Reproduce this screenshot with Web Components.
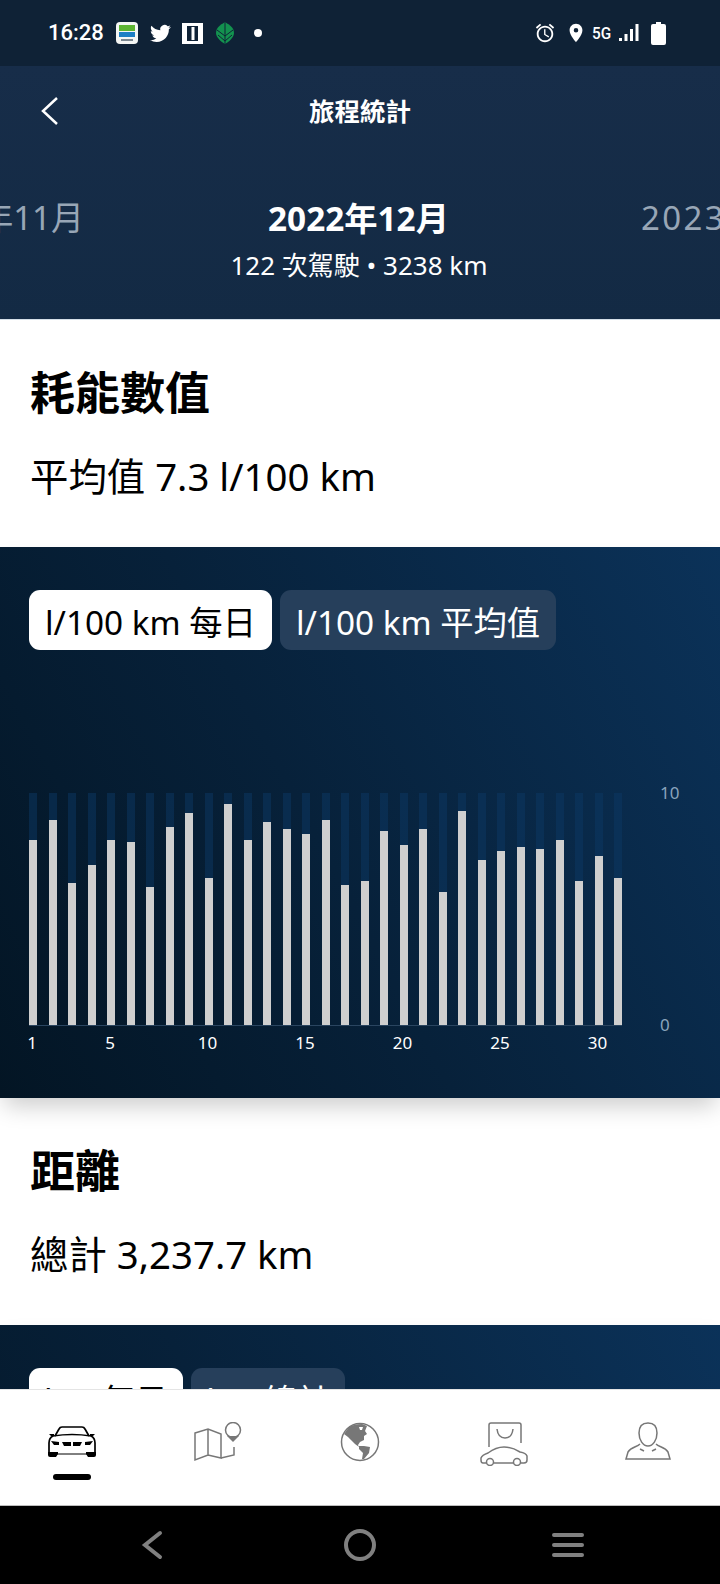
<!DOCTYPE html>
<html lang="zh-Hant">
<head>
<meta charset="utf-8">
<title>旅程統計</title>
<style>
    html, body { margin: 0; padding: 0; background: #000; }
    body { font-family: "Noto Sans", "Noto Sans CJK TC", sans-serif; }
</style>
</head>
<body>
<app-screen>
    <status-bar></status-bar>
    <trip-header></trip-header>
    <stat-section heading="耗能數值" summary="平均值 7.3 l/100 km"></stat-section>
    <chart-panel
        tabs="l/100 km 每日|l/100 km 平均值"
        values="7.96,8.84,6.12,6.90,7.96,7.87,5.93,8.55,9.12,6.32,9.51,7.96,8.74,8.45,8.25,8.84,6.03,6.22,8.36,7.77,8.45,5.73,9.22,7.10,7.49,7.67,7.57,7.96,6.22,7.28,6.32">
    </chart-panel>
    <stat-section heading="距離" summary="總計 3,237.7 km"></stat-section>
    <chart-panel class="compact" tabs="km 每日|km 總計"></chart-panel>
    <bottom-nav slot="nav"></bottom-nav>
</app-screen>

<script>
class AppScreen extends HTMLElement {
    constructor() {
        super();
        this.attachShadow({ mode: 'open' });
        this.shadowRoot.innerHTML = `
            <style>
                :host { display: flex; flex-direction: column; width: 720px; height: 1584px; overflow: hidden; background: #fff; }
                .scroll { flex: 1; min-height: 0; overflow: hidden; }
            </style>
            <div class="scroll"><slot></slot></div>
            <slot name="nav"></slot>
        `;
    }
}

class StatusBar extends HTMLElement {
    constructor() {
        super();
        this.attachShadow({ mode: 'open' });
        this.shadowRoot.innerHTML = `
            <style>
                :host { display: flex; align-items: center; height: 66px; padding: 0 54px 0 48px; background: #0f2236; color: #fff; box-sizing: border-box; }
                .time { font: 500 22px/1 Roboto, sans-serif; width: 68px; }
                svg { display: block; flex: none; }
                .left { display: flex; align-items: center; }
                .right { display: flex; align-items: center; margin-left: auto; }
                .five { font: 500 17px/1 Roboto, sans-serif; transform: scaleX(.9); margin: 1px 7px 0 5px; }
            </style>
            <div class="left">
                <span class="time">16:28</span>
                <svg width="22" height="22" viewBox="0 0 22 22" style="margin-right:12px">
                    <rect width="22" height="22" rx="4" fill="#f4f6f4"/>
                    <rect x="3" y="3" width="16" height="6" fill="#5cb431"/>
                    <rect x="3" y="10" width="16" height="5" fill="#1d7fc4"/>
                    <rect x="5" y="17" width="12" height="2" fill="#7b8790"/>
                </svg>
                <svg width="21" height="21" viewBox="0 0 24 24" fill="#fff" style="margin-right:11px">
                    <path d="M23.953 4.57a10 10 0 01-2.825.775 4.958 4.958 0 002.163-2.723c-.951.555-2.005.959-3.127 1.184a4.92 4.92 0 00-8.384 4.482C7.69 8.095 4.067 6.13 1.64 3.162a4.822 4.822 0 00-.666 2.475c0 1.71.87 3.213 2.188 4.096a4.904 4.904 0 01-2.228-.616v.06a4.923 4.923 0 003.946 4.827 4.996 4.996 0 01-2.212.085 4.936 4.936 0 004.604 3.417 9.867 9.867 0 01-6.102 2.105c-.39 0-.779-.023-1.17-.067a13.995 13.995 0 007.557 2.209c9.053 0 13.998-7.496 13.998-13.985 0-.21 0-.42-.015-.63A9.935 9.935 0 0024 4.59z"/>
                </svg>
                <svg width="21" height="21" viewBox="0 0 21 21" style="margin-right:12px">
                    <rect width="21" height="21" fill="#fff"/>
                    <rect x="5" y="3" width="11" height="15" fill="#0f2236"/>
                    <rect x="9.500" y="4" width="3" height="13" fill="#fff"/>
                </svg>
                <svg width="20" height="22" viewBox="0 0 20 22" style="margin-right:19px">
                    <path d="M10 0 C15 3 19 6 19 11 C19 15 14 20 10 22 C6 20 1 15 1 11 C1 6 5 3 10 0 Z" fill="#13924f"/>
                    <path d="M10 0 V22 M2 8 L10 14 L18 8 M3 13 L10 19 L17 13" fill="none" stroke="#0f2236" stroke-width="1"/>
                </svg>
                <svg width="8" height="8" viewBox="0 0 8 8"><circle cx="4" cy="4" r="4" fill="#fff"/></svg>
            </div>
            <div class="right">
                <svg width="22" height="22" viewBox="0 0 24 24" fill="#fff" style="margin-right:9px">
                    <path d="M22 5.72l-4.6-3.86-1.29 1.53 4.6 3.86L22 5.72zM7.88 3.39L6.6 1.86 2 5.71l1.29 1.53 4.59-3.85zM12.5 8H11v6l4.75 2.85.75-1.23-4-2.37V8zM12 4c-4.97 0-9 4.03-9 9s4.03 9 9 9 9-4.03 9-9-4.03-9-9-9zm0 16c-3.87 0-7-3.13-7-7s3.13-7 7-7 7 3.13 7 7-3.13 7-7 7z"/>
                </svg>
                <svg width="22" height="22" viewBox="0 0 24 24" fill="#fff" style="margin-right:-1px">
                    <path d="M12 2C8.13 2 5 5.13 5 9c0 5.25 7 13 7 13s7-7.75 7-13c0-3.87-3.13-7-7-7zm0 9.5a2.5 2.5 0 010-5 2.5 2.5 0 010 5z"/>
                </svg>
                <span class="five">5G</span>
                <svg width="20" height="18" viewBox="0 0 20 18" fill="#fff" style="margin-right:12px">
                    <rect x="0" y="14" width="3" height="3"/>
                    <rect x="5.500" y="10" width="3" height="7"/>
                    <rect x="11" y="5" width="3" height="12"/>
                    <rect x="16.500" y="0" width="3" height="17"/>
                </svg>
                <svg width="15" height="23" viewBox="0 0 15 23" fill="#fff">
                    <path d="M5 0h5v2h3a2 2 0 012 2v17a2 2 0 01-2 2H2a2 2 0 01-2-2V4a2 2 0 012-2h3z"/>
                </svg>
            </div>
        `;
    }
}

class TripHeader extends HTMLElement {
    constructor() {
        super();
        this.attachShadow({ mode: 'open' });
        this.shadowRoot.innerHTML = `
            <style>
                :host { display: block; height: 253px; background: linear-gradient(#172d49, #132a44); color: #fff; overflow: hidden; border-bottom: 1px solid #d5dfe8; }
                .top { position: relative; display: flex; justify-content: center; align-items: center; height: 92px; }
                .top svg { position: absolute; left: 40px; top: 30px; }
                .title { font-size: 25.500px; font-weight: 700; line-height: 1; }
                .months { display: grid; grid-template-columns: 84px 1fr 79px; align-items: center; margin-top: 37px; white-space: nowrap; }
                .side { font-size: 33px; line-height: 46px; color: #98a6b6; overflow: hidden; }
                .prev { display: flex; justify-content: flex-end; }
                .next { letter-spacing: 2.400px; }
                .now { font-size: 33.300px; line-height: 46px; font-weight: 700; text-align: center; padding-right: 8px; }
                .sub { text-align: center; font-size: 26px; line-height: 34px; margin-top: 7px; padding-right: 2px; }
            </style>
            <div class="top">
                <svg width="20" height="30" viewBox="0 0 20 30" fill="none" stroke="#fff" stroke-width="2.500"><path d="M17 2 L3 15 L17 28"/></svg>
                <span class="title">旅程統計</span>
            </div>
            <div class="months">
                <div class="side prev"><span>2022年11月</span></div>
                <div class="now">2022年12月</div>
                <div class="side next">2023年1月</div>
            </div>
            <div class="sub">122 次駕駛 • 3238 km</div>
        `;
    }
}

class StatSection extends HTMLElement {
    constructor() {
        super();
        this.attachShadow({ mode: 'open' });
        this.shadowRoot.innerHTML = `
            <style>
                :host { display: block; height: 227px; padding: 40px 30px 0; box-sizing: border-box; background: #fff; color: #000; }
                h2 { margin: 0; font-size: 45px; line-height: 66px; font-weight: 700; }
                p { margin: 22px 0 0; font-size: 38.400px; line-height: 56px; }
            </style>
            <h2>${this.getAttribute('heading')}</h2>
            <p>${this.getAttribute('summary')}</p>
        `;
    }
}

class ChartPanel extends HTMLElement {
    constructor() {
        super();
        this.attachShadow({ mode: 'open' });
        const tabs = this.getAttribute('tabs').split('|');
        const values = (this.getAttribute('values') || '').split(',').filter(Boolean).map(Number);
        this.shadowRoot.innerHTML = `
            <style>
                :host { display: block; height: 551px; box-sizing: border-box; padding: 43px 0 0 29px; position: relative; background: linear-gradient(62deg, #031524 0%, #07213a 45%, #0b3259 100%); box-shadow: 0 12px 22px -4px rgba(0,0,0,.2); }
                .tabs { display: flex; gap: 8px; }
                .tab { height: 60px; padding: 0 16px; display: flex; align-items: center; border-radius: 11px; background: #263f5b; color: #fff; font-size: 33.300px; box-sizing: border-box; }
                :host(.compact) .tab { padding: 0 15px; }
                .tab.on { background: #fff; color: #000; }
                .plot { display: flex; margin-top: 143px; }
                .cols { display: grid; grid-template-columns: repeat(31, 8px); column-gap: 11.510px; height: 232px; align-items: stretch; border-bottom: 1px solid #2a4560; }
                .col { background: rgba(12, 56, 100, .5); display: flex; align-items: flex-end; }
                .col i { display: block; width: 100%; background: #cfcfcf; }
                .days { display: grid; grid-template-columns: repeat(31, 8px); column-gap: 11.510px; margin-top: 5px; color: #fff; font-size: 17px; line-height: 24px; }
                .days span { display: flex; justify-content: center; white-space: nowrap; padding-right: 2px; }
                .axis { display: flex; flex-direction: column; justify-content: space-between; height: 256px; margin: -12px 0 0 38px; color: #8aa4bd; font-size: 17px; line-height: 24px; }
            </style>
            <div class="tabs">
                ${tabs.map((t, i) => `<div class="tab ${i === 0 ? 'on' : ''}">${t}</div>`).join('')}
            </div>
            ${values.length ? `
            <div class="plot">
                <div>
                    <div class="cols">
                        ${values.map(v => `<div class="col"><i style="height:${v * 10}%"></i></div>`).join('')}
                    </div>
                    <div class="days">
                        ${values.map((v, i) => {
                            const day = i + 1;
                            return `<span>${day === 1 || day % 5 === 0 ? day : ''}</span>`;
                        }).join('')}
                    </div>
                </div>
                <div class="axis"><span>10</span><span>0</span></div>
            </div>` : ''}
        `;
    }
}

class BottomNav extends HTMLElement {
    constructor() {
        super();
        this.attachShadow({ mode: 'open' });
        this.shadowRoot.innerHTML = `
            <style>
                :host { display: block; background: #000; }
                .tabs { display: grid; grid-template-columns: repeat(5, 1fr); height: 117px; background: #fff; border-top: 1px solid #e4e4e4; border-bottom: 1px solid #bdbdbd; box-sizing: border-box; }
                .item { display: flex; flex-direction: column; align-items: center; padding-top: 32px; }
                .item svg { display: block; }
                .mark { width: 38px; height: 6px; border-radius: 3px; background: #000; margin-top: 17px; }
                .keys { display: grid; grid-template-columns: repeat(3, 1fr); align-items: center; justify-items: center; height: 78px; padding: 0 48px; }
            </style>
            <div class="tabs">
                <div class="item" style="padding-top:36px">
                    <svg width="48" height="31" viewBox="0 0 48 31" fill="none" stroke="#000" stroke-width="1.700">
                        <path d="M7 10 L11 3 Q12 1 14 1 H34 Q36 1 37 3 L41 10"/>
                        <path d="M1 28 V17 Q1 12 5 10 Q24 7 43 10 Q47 12 47 17 V28"/>
                        <path d="M3 28 H45" stroke-width="1"/>
                        <g fill="#000" stroke="none">
                            <path d="M0 26 H10 V28 L8 31 H2 Q0 31 0 29 Z"/>
                            <path d="M38 26 H48 V29 Q48 31 46 31 H40 L38 28 Z"/>
                            <path d="M3 15 L11 16 V19 L6 19 Z"/>
                            <path d="M45 15 L37 16 V19 L42 19 Z"/>
                            <path d="M14 16 H23 V20 H16 Z"/>
                            <path d="M25 16 H34 L32 20 H25 Z"/>
                            <path d="M1 8 H6 V10 H3 Z"/>
                            <path d="M47 8 H42 V10 H45 Z"/>
                        </g>
                    </svg>
                    <div class="mark"></div>
                </div>
                <div class="item" style="padding-top:32px">
                    <svg width="49" height="40" viewBox="0 0 49 40" fill="none" stroke="#777" stroke-width="1.500" style="margin-left:5px">
                        <path d="M1 11 L14 7 L27 12 V36 L14 33 L1 38 Z M14 7 V33"/>
                        <path d="M27 36 L40 33 V25"/>
                        <circle cx="39" cy="8" r="7.500"/>
                        <path d="M33 14 L39 20 L45 14 Z" fill="#777" stroke="none"/>
                    </svg>
                </div>
                <div class="item" style="padding-top:32px">
                    <svg width="40" height="40" viewBox="0 0 40 40">
                        <circle cx="20" cy="20" r="18.500" fill="#fff" stroke="#777" stroke-width="1.500"/>
                        <path d="M4 12 L9 5 Q14 2 22 2 L27 4 L25 9 L27 12 L24 14 L24 18 L20 20 L18 23 L19 25 L15 22 L11 18 L8 15 Z" fill="#777"/>
                        <path d="M19 5 L23 5 L22 8 L20 8 Z" fill="#fff"/>
                        <path d="M19 24 L24 24 L30 25 L29 31 L24 37 L22 37 L23 31 L19 27 Z" fill="#777"/>
                    </svg>
                </div>
                <div class="item" style="padding-top:32px">
                    <svg width="48" height="44" viewBox="0 0 48 44" fill="none" stroke="#777" stroke-width="1.500">
                        <path d="M9 25 V3 Q9 1 11 1 H39 Q41 1 41 3 V21"/>
                        <path d="M17 7 Q18 16 25 16 Q32 16 33 7"/>
                        <path d="M6 41 H3 Q1 41 1 38 V36 Q2 33 8 31 Q16 25 24 25 Q32 25 40 30 Q46 31 47 34 V38 Q47 41 44 41 H41"/>
                        <path d="M14 41 H33"/>
                        <circle cx="10" cy="40" r="3.500"/>
                        <circle cx="37" cy="40" r="3.500"/>
                    </svg>
                </div>
                <div class="item" style="padding-top:32px">
                    <svg width="46" height="38" viewBox="0 0 46 38" fill="none" stroke="#777" stroke-width="1.500">
                        <path d="M23 1 C16 1 14 6 14 11 C14 18 18 24 23 24 C28 24 32 18 32 11 C32 6 30 1 23 1 Z"/>
                        <path d="M15 22 C12 25 6 25 3 30 L1 37 H45 L43 30 C40 25 34 25 31 22"/>
                        <path d="M15 27 L19 29 M31 27 L27 29"/>
                    </svg>
                </div>
            </div>
            <div class="keys">
                <svg width="24" height="32" viewBox="0 0 24 32" fill="none" stroke="#808080" stroke-width="4" stroke-linecap="round"><path d="M20 4 L5 16 L20 28"/></svg>
                <svg width="34" height="34" viewBox="0 0 34 34" fill="none" stroke="#808080" stroke-width="4"><circle cx="17" cy="17" r="14"/></svg>
                <svg width="34" height="30" viewBox="0 0 34 30" fill="none" stroke="#808080" stroke-width="4" stroke-linecap="round"><path d="M3 5 H31 M3 15 H31 M3 25 H31"/></svg>
            </div>
        `;
    }
}

customElements.define('app-screen', AppScreen);
customElements.define('status-bar', StatusBar);
customElements.define('trip-header', TripHeader);
customElements.define('stat-section', StatSection);
customElements.define('chart-panel', ChartPanel);
customElements.define('bottom-nav', BottomNav);
</script>
</body>
</html>
